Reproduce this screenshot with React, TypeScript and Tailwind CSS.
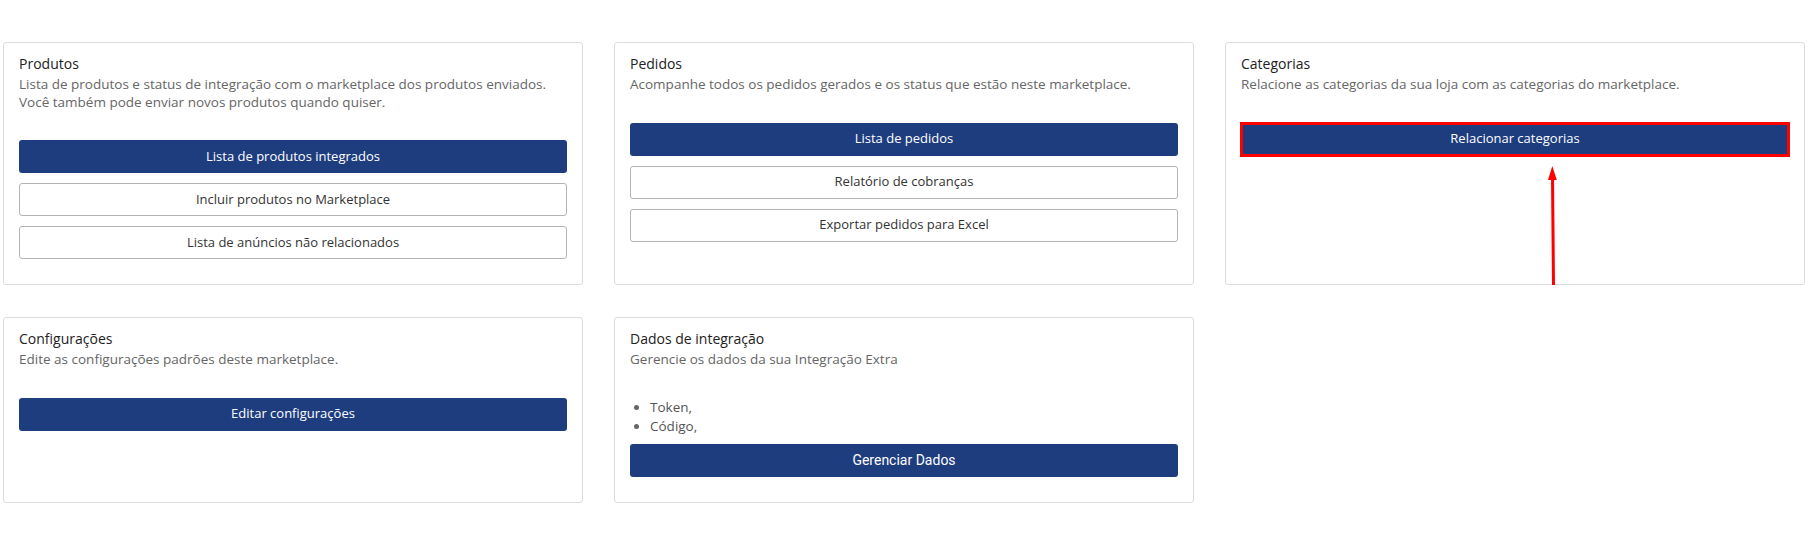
import type { ReactNode } from "react";

type CardProps = {
  title: string;
  description: ReactNode;
  children: ReactNode;
  className?: string;
};

function Card({ title, description, children, className = "" }: CardProps) {
  return (
    <section className={`relative rounded-[3px] border border-[#dcdcdc] bg-white px-[15px] pt-[10px] pb-[25px] ${className}`}>
      <h3 className="text-[14px] leading-[22px] font-medium text-[#222]">{title}</h3>
      <p className="mt-[1px] whitespace-nowrap text-[13.5px] leading-[17.5px] text-[#666]">{description}</p>
      {children}
    </section>
  );
}

function PrimaryButton({ children, className = "" }: { children: ReactNode; className?: string }) {
  return (
    <button
      type="button"
      className={`flex h-[33px] w-full items-center justify-center rounded-[3px] bg-[#1e3d7e] text-[13px] text-white ${className}`}
    >
      {children}
    </button>
  );
}

function OutlineButton({ children }: { children: ReactNode }) {
  return (
    <button
      type="button"
      className="flex h-[33px] w-full items-center justify-center rounded-[3px] border border-[#b4b4b4] bg-white text-[13px] text-[#333]"
    >
      {children}
    </button>
  );
}

export default function App() {
  return (
    <div className="min-h-[555px] bg-white pt-[42px] pl-[3px] pr-[14px] font-['Open_Sans',sans-serif]">
      <div className="grid grid-cols-3 gap-x-[31px] gap-y-[32px]">
        <Card
          title="Produtos"
          description={
            <>
              Lista de produtos e status de integração com o marketplace dos produtos enviados.
              <br />
              Você também pode enviar novos produtos quando quiser.
            </>
          }
        >
          <div className="mt-[29px] flex flex-col gap-[10px]">
            <PrimaryButton>Lista de produtos integrados</PrimaryButton>
            <OutlineButton>Incluir produtos no Marketplace</OutlineButton>
            <OutlineButton>Lista de anúncios não relacionados</OutlineButton>
          </div>
        </Card>

        <Card title="Pedidos" description="Acompanhe todos os pedidos gerados e os status que estão neste marketplace.">
          <div className="mt-[29px] flex flex-col gap-[10px]">
            <PrimaryButton>Lista de pedidos</PrimaryButton>
            <OutlineButton>Relatório de cobranças</OutlineButton>
            <OutlineButton>Exportar pedidos para Excel</OutlineButton>
          </div>
        </Card>

        <Card title="Categorias" description="Relacione as categorias da sua loja com as categorias do marketplace.">
          <div className="relative mt-[29px]">
            <PrimaryButton>Relacionar categorias</PrimaryButton>
            {/* highlight box around the button */}
            <span className="pointer-events-none absolute -inset-[1px] border-[3px] border-[#ff0000]" />
          </div>
          {/* pointer arrow */}
          <svg
            className="pointer-events-none absolute left-[320px] top-[123px]"
            width="14"
            height="120"
            viewBox="0 0 14 120"
          >
            <line x1="7.5" y1="119" x2="6.5" y2="10" stroke="#ff0000" strokeWidth="3" />
            <polygon points="6.3,0 2,14 10.8,14" fill="#ff0000" />
          </svg>
        </Card>

        <Card title="Configurações" description="Edite as configurações padrões deste marketplace.">
          <PrimaryButton className="mt-[29px]">Editar configurações</PrimaryButton>
        </Card>

        <Card title="Dados de integração" description="Gerencie os dados da sua Integração Extra">
          <ul className="mt-[29px] list-disc pl-5 text-[13.5px] leading-[19px] text-[#555] marker:text-[#666]">
            <li>Token,</li>
            <li>Código,</li>
          </ul>
          <PrimaryButton className="mt-[8px] font-['Roboto',Arial,sans-serif] text-[14px]">
            Gerenciar Dados
          </PrimaryButton>
        </Card>
      </div>
    </div>
  );
}
